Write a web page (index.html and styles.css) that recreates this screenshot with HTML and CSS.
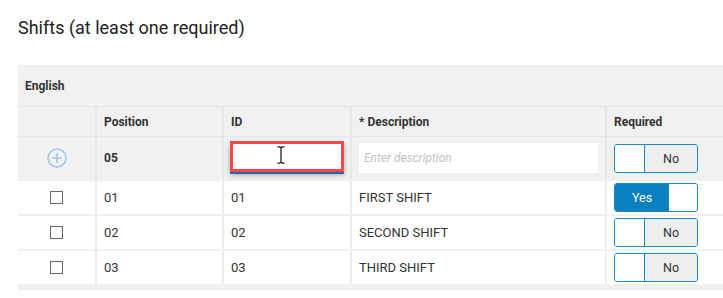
FILE: index.html
```html
<!DOCTYPE html>
<html>
<head>
<meta charset="utf-8">
<link rel="stylesheet" href="styles.css">
</head>
<body>
<h1 class="title">Shifts (at least one required)</h1>
<div class="panel">
  <div class="lang">English</div>
  <div class="row head">
    <div class="cell"></div>
    <div class="cell">Position</div>
    <div class="cell">ID</div>
    <div class="cell">* Description</div>
    <div class="cell">Required</div>
  </div>
  <div class="row new">
    <div class="cell center">
      <svg class="plus" width="20" height="20" viewBox="0 0 20 20"><circle cx="10" cy="10" r="9" fill="none" stroke="#9fc7ef" stroke-width="1.5"/><path d="M10 5.2v9.6M5.2 10h9.6" stroke="#9fc7ef" stroke-width="1.7" fill="none"/></svg>
    </div>
    <div class="cell bold">05</div>
    <div class="cell">
      <div class="id-input">
        <svg class="ibeam" width="8" height="18" viewBox="0 0 8 18"><path d="M0.5 0.8h2.2l1.3 1.2 1.3-1.2h2.2M4 2v14M0.5 17.2h2.2l1.3-1.2 1.3 1.2h2.2" fill="none" stroke="#111" stroke-width="1.2"/></svg>
      </div>
    </div>
    <div class="cell">
      <div class="desc-input">Enter description</div>
    </div>
    <div class="cell">
      <div class="toggle off"><span class="knob"></span><span class="label">No</span></div>
    </div>
  </div>
  <div class="row data">
    <div class="cell center"><span class="check"></span></div>
    <div class="cell">01</div>
    <div class="cell">01</div>
    <div class="cell">FIRST SHIFT</div>
    <div class="cell"><div class="toggle on"><span class="label">Yes</span><span class="knob"></span></div></div>
  </div>
  <div class="row data">
    <div class="cell center"><span class="check"></span></div>
    <div class="cell">02</div>
    <div class="cell">02</div>
    <div class="cell">SECOND SHIFT</div>
    <div class="cell"><div class="toggle off"><span class="knob"></span><span class="label">No</span></div></div>
  </div>
  <div class="row data">
    <div class="cell center"><span class="check"></span></div>
    <div class="cell">03</div>
    <div class="cell">03</div>
    <div class="cell">THIRD SHIFT</div>
    <div class="cell"><div class="toggle off"><span class="knob"></span><span class="label">No</span></div></div>
  </div>
</div>
</body>
</html>
```
FILE: styles.css
```css
html, body {
  margin: 0;
  padding: 0;
  background: #fff;
}
body {
  font-family: Roboto, "Liberation Sans", sans-serif;
  color: #333;
  width: 723px;
  overflow: hidden;
}
.title {
  margin: 0;
  padding: 17px 0 0 18px;
  font-size: 18px;
  font-weight: 400;
  line-height: 22px;
  color: #222;
}
.panel {
  margin: 26px 0 0 18px;
  width: 730px;
  background: #f1f1f1;
  padding-bottom: 4px;
}
.lang {
  height: 41px;
  display: flex;
  align-items: center;
  padding-left: 7px;
  font-size: 12px;
  font-weight: 700;
  border-bottom: 1px solid #e4e4e4;
}
.row {
  display: grid;
  grid-template-columns: 77px 125px 126px 253px 1fr;
  column-gap: 2px;
  background: #e7e7e7;
  margin-bottom: 2px;
}
.cell {
  display: flex;
  align-items: center;
  padding-left: 7px;
  background: #f1f1f1;
  font-size: 13px;
  min-width: 0;
}
.cell.center {
  padding-left: 0;
  justify-content: center;
}
.head .cell {
  font-size: 12px;
  font-weight: 700;
}
.row.head {
  height: 29px;
  margin-bottom: 0;
  padding-bottom: 1px;
}
.new {
  height: 42px;
}
.bold {
  font-weight: 700;
  font-size: 12px;
}
.data {
  height: 33px;
  background: #ececec;
}
.data .cell {
  background: #fff;
}
.plus {
  display: block;
}
.id-input {
  position: relative;
  align-self: flex-start;
  margin-top: 4px;
  margin-left: -1px;
  width: 114px;
  height: 31px;
  box-sizing: border-box;
  border: 3px solid #f24848;
  background: #fff;
  box-shadow: 0 2px 0 #2e62ae, 0 3px 5px rgba(0, 0, 0, 0.3);
}
.ibeam {
  position: absolute;
  left: 44px;
  top: 2px;
}
.desc-input {
  width: 239px;
  height: 30px;
  box-sizing: border-box;
  background: #fff;
  padding-left: 5px;
  display: flex;
  align-items: center;
  font-size: 12px;
  font-style: italic;
  color: #c2c2c2;
}
.toggle {
  display: flex;
  width: 84px;
  height: 29px;
  box-sizing: border-box;
  border: 1px solid #1b86c4;
  border-radius: 3px;
  overflow: hidden;
  font-size: 12.5px;
}
.toggle .knob {
  background: #fff;
}
.toggle .label {
  flex: 1;
  display: flex;
  align-items: center;
  justify-content: center;
}
.toggle.off .knob {
  width: 29px;
  border-right: 1px solid #1b86c4;
}
.toggle.off .label {
  background: #eef0ef;
  color: #333;
}
.toggle.on .label {
  background: #0a80c0;
  color: #fff;
}
.toggle.on .knob {
  width: 28px;
  border-radius: 3px;
}
.check {
  width: 13px;
  height: 13px;
  box-sizing: border-box;
  border: 1px solid #666;
  background: #fff;
}
```
